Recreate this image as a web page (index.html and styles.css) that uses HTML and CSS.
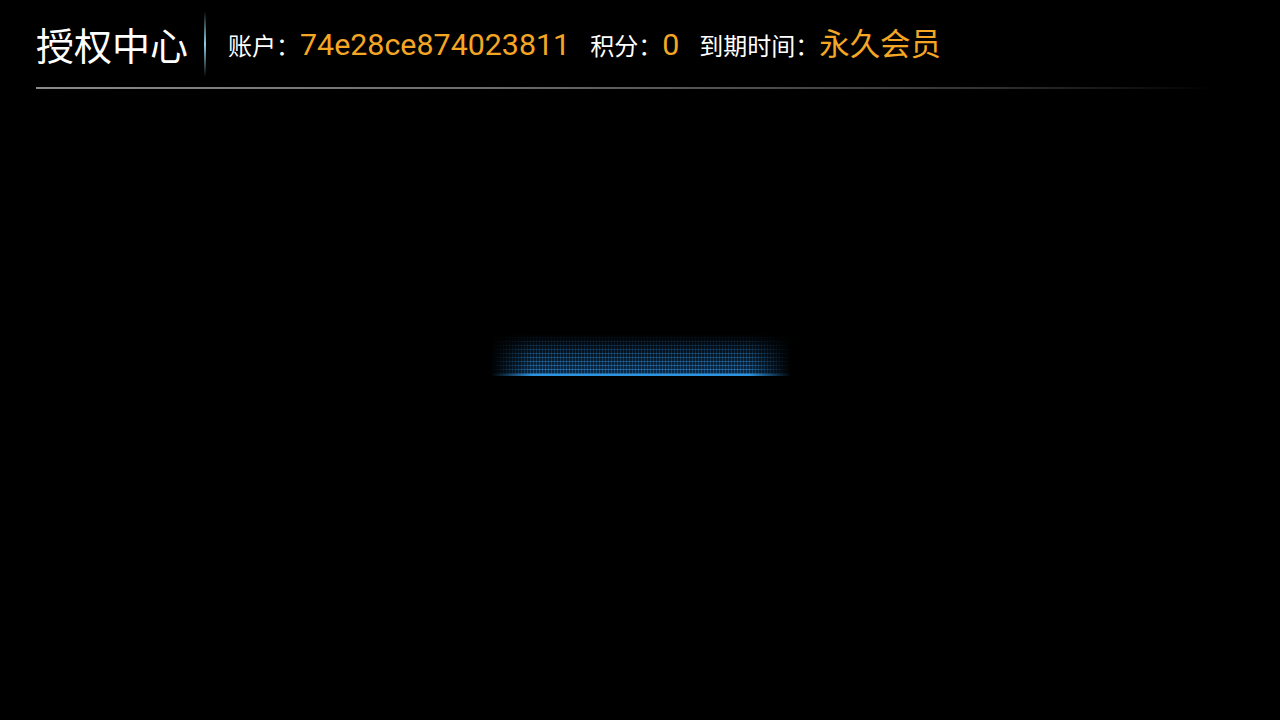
FILE: index.html
```html
<!DOCTYPE html>
<html lang="zh-CN">
<head>
<meta charset="utf-8">
<title>授权中心</title>
<link rel="stylesheet" href="styles.css">
</head>
<body>
<header class="header">
  <h1 class="title">授权中心</h1>
  <span class="divider"></span>
  <div class="info">
    <div class="item"><span class="label">账户：</span><span class="value">74e28ce874023811</span></div>
    <div class="item"><span class="label">积分：</span><span class="value">0</span></div>
    <div class="item"><span class="label">到期时间：</span><span class="value">永久会员</span></div>
  </div>
</header>
<div class="rule"></div>
<main class="main">
  <div class="loader"><div class="grid"></div></div>
</main>
</body>
</html>
```

FILE: styles.css
```css
html, body {
  margin: 0;
  padding: 0;
  background: #000;
  width: 1280px;
  height: 720px;
  overflow: hidden;
  font-family: Roboto, "Noto Sans CJK SC", sans-serif;
  color: #fff;
}

.header {
  display: flex;
  align-items: center;
  height: 87px;
  padding-left: 36px;
  box-sizing: border-box;
}

.title {
  margin: 0;
  font-size: 38px;
  font-weight: 400;
  line-height: 1;
  color: #fff;
  font-family: "Noto Sans CJK SC", sans-serif;
  padding-top: 0;
}

.divider {
  width: 2px;
  height: 66px;
  margin-left: 16px;
  background: linear-gradient(to bottom, rgba(120, 200, 235, 0) 0%, rgba(150, 215, 242, 0.95) 50%, rgba(120, 200, 235, 0) 100%);
}

.info {
  display: flex;
  align-items: baseline;
  gap: 20px;
  margin-left: 22px;
  margin-top: -3px;
}

.item {
  display: flex;
  align-items: baseline;
}

.label {
  font-size: 24px;
  color: #fff;
}

.value {
  font-size: 30.4px;
  color: #f4a624;
}

.rule {
  margin-left: 36px;
  width: 1180px;
  height: 2px;
  background: linear-gradient(to right, #8a8a8a 0%, #6a6a6a 40%, #333 80%, rgba(40, 40, 40, 0) 100%);
}

.main {
  display: flex;
  justify-content: center;
  padding-top: 245px;
  padding-left: 2px;
}

.loader {
  position: relative;
  width: 300px;
  height: 42px;
  -webkit-mask-image: linear-gradient(to right, transparent 0%, #000 14%, #000 86%, transparent 100%);
  mask-image: linear-gradient(to right, transparent 0%, #000 14%, #000 86%, transparent 100%);
  background:
    linear-gradient(to top, #2d94e0 0, #2d94e0 1.5px, rgba(20, 75, 130, 0.55) 2px, rgba(10, 40, 80, 0) 100%);
}

.grid {
  position: absolute;
  inset: 0 0 2px 0;
  background:
    repeating-linear-gradient(90deg, rgba(50, 150, 230, 0.35) 0 1px, transparent 1px 3px),
    repeating-linear-gradient(0deg, rgba(60, 160, 235, 0.5) 0 1px, transparent 1px 4px);
  -webkit-mask-image: linear-gradient(to top, #000 0%, rgba(0, 0, 0, 0.65) 50%, transparent 100%);
  mask-image: linear-gradient(to top, #000 0%, rgba(0, 0, 0, 0.65) 50%, transparent 100%);
}
```
